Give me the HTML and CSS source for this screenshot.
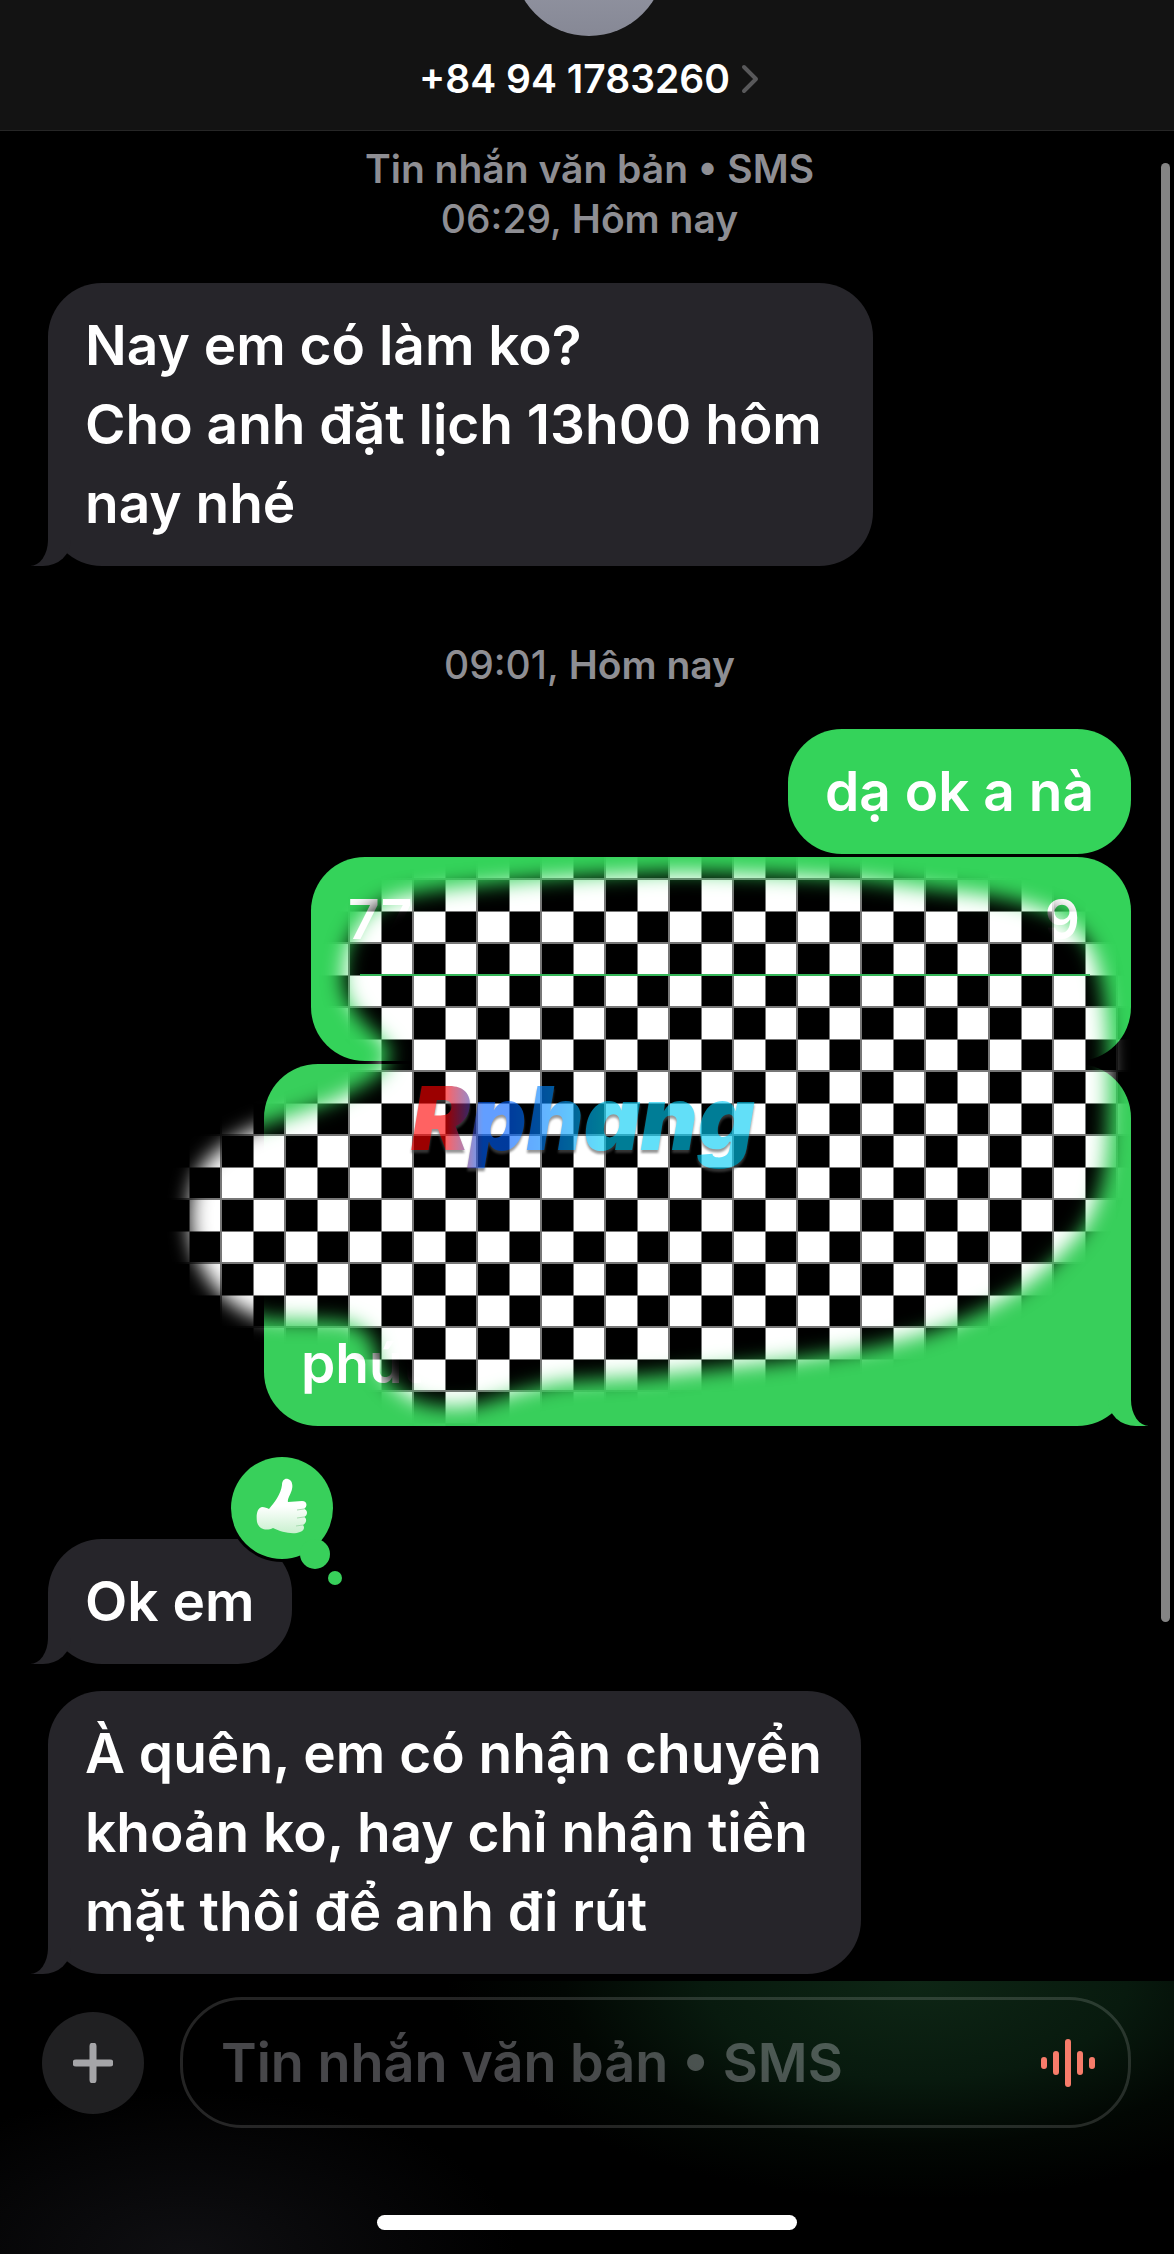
FILE: index.html
```html
<!DOCTYPE html>
<html lang="vi">
<head>
    <meta charset="UTF-8">
    <meta name="viewport" content="width=device-width, initial-scale=1.0">
    <title>+84 94 1783260</title>
    <link rel="stylesheet" href="styles.css">
</head>
<body>
    <header class="header">
        <div class="avatar"></div>
        <button class="contact" type="button">
            <span>+84 94 1783260</span>
            <svg class="chevron" width="18" height="30" viewBox="0 0 18 30" aria-hidden="true">
                <path d="M3 3 L15 15 L3 27" />
            </svg>
        </button>
    </header>

    <main class="thread">
        <div class="stamp">
            <strong>Tin nhắn văn bản • SMS</strong><br>
            06:29, <strong>Hôm nay</strong>
        </div>

        <div class="bubble received wide tail">Nay em có làm ko?<br>Cho anh đặt lịch 13h00 hôm<br>nay nhé</div>

        <div class="stamp later">09:01, <strong>Hôm nay</strong></div>

        <div class="bubble sent">dạ ok a nà</div>

        <div class="covered">
            <div class="bubble sent number"><span>77</span><span>9</span></div>
            <div class="bubble sent address tail">phút</div>

            <!-- checkerboard brushed over both messages -->
            <svg class="cover" width="980" height="570" viewBox="151 857 980 570" aria-hidden="true">
                <defs>
                    <pattern id="checker" x="189" y="911" width="64" height="64" patternUnits="userSpaceOnUse">
                        <rect width="64" height="64" fill="#fff" />
                        <rect x="0" y="0" width="32" height="32" fill="#000" />
                        <rect x="32" y="32" width="32" height="32" fill="#000" />
                        <path d="M0 0 H64 M0 32 H64 M0 0 V64 M32 0 V64" stroke="#777" stroke-width="2" />
                    </pattern>
                    <filter id="soft" x="-10%" y="-10%" width="120%" height="120%" color-interpolation-filters="sRGB">
                        <feGaussianBlur stdDeviation="10" />
                    </filter>
                    <mask id="brush" maskUnits="userSpaceOnUse" x="151" y="857" width="980" height="570">
                        <path filter="url(#soft)" fill="#fff" d="M190 1225 Q188 1178 210 1157 Q236 1134 267 1124 L300 1113 L333 1101 L365 1084 Q394 1068 388 1046 L373 1031 Q350 1012 343 985 Q342 950 356 930 Q366 908 400 896 Q440 888 493 884 Q560 876 683 872 Q784 874 864 880 L941 890 Q1000 894 1044 909 Q1080 922 1094 955 Q1107 990 1108 1060 Q1110 1160 1101 1186 Q1092 1225 1068 1247 Q1030 1290 977 1313 Q930 1336 864 1349 L784 1361 L650 1376 L560 1382 Q520 1390 480 1404 Q447 1412 413 1400 Q385 1384 377 1362 Q376 1326 340 1321 L267 1319 Q232 1312 208 1278 Q192 1255 190 1225 Z" />
                    </mask>
                    <linearGradient id="ink" x1="0" x2="1" y1="0" y2="0">
                        <stop offset="0.1" stop-color="#ff0000" />
                        <stop offset="0.21" stop-color="#0062ff" />
                        <stop offset="0.28" stop-color="#0060ff" />
                        <stop offset="0.42" stop-color="#0090ff" />
                        <stop offset="0.56" stop-color="#00ccf5" />
                    </linearGradient>
                </defs>
                <rect x="151" y="857" width="980" height="570" fill="url(#checker)" mask="url(#brush)" />
                <path d="M360 975 H1090" stroke="#35b558" stroke-width="2" />
                <text class="wordmark" x="411" y="1150">Rphang</text>
            </svg>
        </div>

        <div class="bubble received reacted tail">
            Ok em
            <svg class="reaction" width="120" height="136" viewBox="228 1454 120 136" role="img" aria-label="Thích">
                <defs>
                    <linearGradient id="hand" x1="0" x2="0" y1="0" y2="1">
                        <stop offset="0.5" stop-color="#fff" />
                        <stop offset="1" stop-color="#c9f0cf" />
                    </linearGradient>
                </defs>
                <circle cx="282" cy="1508" r="54" fill="#000" />
                <g fill="#38d05b">
                    <circle cx="282" cy="1508" r="51" />
                    <circle cx="315" cy="1554" r="15" />
                    <circle cx="335" cy="1578" r="7" />
                </g>
                <path fill="url(#hand)" d="M269 1509 C274 1503 281 1494 282 1485 C282 1480 285 1478 288 1479 C292 1480 293 1485 292 1489 C291 1494 287 1499 288 1502 L302 1501 C307 1501 308 1506 304 1509 C308 1510 308 1515 304 1517 C307 1518 307 1523 303 1525 C305 1527 304 1531 300 1532 C293 1535 281 1532 273 1528 C267 1531 259 1530 257 1522 C256 1515 257 1508 262 1507 C265 1507 267 1508 269 1509 Z" />
                <path fill="none" stroke="#a8dcb1" stroke-width="1" d="M297 1510 L304 1509 M297 1518 L304 1517 M296 1526 L303 1525" />
            </svg>
        </div>

        <div class="bubble received question tail">À quên, em có nhận chuyển<br>khoản ko, hay chỉ nhận tiền<br>mặt thôi để anh đi rút</div>
        <div class="scrollbar"></div>
    </main>

    <footer class="footer">
        <form class="composer">
            <button class="plus" type="button" aria-label="Thêm">
                <svg width="40" height="40" viewBox="0 0 40 40" aria-hidden="true">
                    <path d="M20 3 V37 M3 20 H37" />
                </svg>
            </button>
            <div class="field">
                <input type="text" aria-label="Tin nhắn văn bản" placeholder="Tin nhắn văn bản • SMS">
                <button class="voice" type="button" aria-label="Ghi âm">
                    <svg width="54" height="48" viewBox="0 0 54 48" aria-hidden="true">
                        <path d="M3 21 V27 M15 15 V33 M27 3 V45 M39 15 V33 M51 21 V27" />
                    </svg>
                </button>
            </div>
        </form>
        <div class="home-bar"></div>
    </footer>
</body>
</html>
```
FILE: styles.css
```css
* {
    box-sizing: border-box;
}

body {
    margin: 0;
    min-height: 100vh;
    display: flex;
    flex-direction: column;
    overflow-x: hidden;
    background: #000;
    color: #fff;
    font-family: Inter, "Noto Sans", sans-serif;
    font-weight: 500;
}

button {
    padding: 0;
    border: none;
    background: none;
    color: inherit;
    font: inherit;
    cursor: pointer;
}

/* Contact bar */
.header {
    height: 131px;
    display: flex;
    flex-direction: column;
    align-items: center;
    padding-left: 4px;
    background: #131313;
    border-bottom: 1px solid #262626;
}

.avatar {
    flex: none;
    width: 152px;
    height: 152px;
    margin-top: -116px;
    border-radius: 50%;
    background: linear-gradient(#a5a8b6, #868895);
}

.contact {
    display: flex;
    align-items: center;
    gap: 11px;
    margin-top: 18px;
    font-size: 39px;
    font-weight: 600;
    line-height: 50px;
}

.chevron {
    fill: none;
    stroke: #58585a;
    stroke-width: 4;
    stroke-linecap: round;
    stroke-linejoin: round;
}

/* Messages */
.thread {
    position: relative;
    flex: 1;
    display: flex;
    flex-direction: column;
    align-items: flex-start;
    padding: 13px 43px 7px 48px;
}

.stamp {
    align-self: center;
    margin-bottom: 39px;
    color: #8e8e93;
    font-size: 39px;
    line-height: 50px;
    text-align: center;
}

.stamp strong {
    font-weight: 600;
}

.later {
    margin-top: 74px;
}

.bubble {
    position: relative;
    padding: 23px 37px;
    border-radius: 54px;
    font-size: 55px;
    font-weight: 600;
    line-height: 79px;
}

.received {
    background: #26252a;
}

.sent {
    align-self: flex-end;
    background: #34d35a;
}

/* The tail is a foot under the corner, cut by a curved piece of background */
.tail::before,
.tail::after {
    content: "";
    position: absolute;
    bottom: 0;
}

.tail::before {
    width: 40px;
    height: 54px;
    background: inherit;
}

.tail::after {
    width: 30px;
    height: 56px;
    background: #000;
}

.received.tail::before {
    left: -17px;
    border-bottom-right-radius: 28px 26px;
}

.received.tail::after {
    left: -30px;
    border-bottom-right-radius: 18px 26px;
}

.sent.tail::before {
    right: -17px;
    border-bottom-left-radius: 28px 26px;
}

.sent.tail::after {
    right: -30px;
    border-bottom-left-radius: 18px 26px;
}

.wide {
    width: 825px;
}

.question {
    width: 813px;
    margin-top: 27px;
    white-space: nowrap;
}

.covered {
    position: relative;
    align-self: flex-end;
    display: flex;
    flex-direction: column;
    gap: 3px;
    margin-top: 3px;
}

.number {
    display: flex;
    justify-content: space-between;
    width: 820px;
    height: 204px;
    padding-right: 51px;
}

.address {
    width: 867px;
    height: 362px;
    padding-top: 260px;
    background: #38cf5b;
}

.cover {
    position: absolute;
    top: 0;
    right: 0;
}

.wordmark {
    fill: url(#ink);
    opacity: 0.61;
    font-size: 88px;
    font-style: italic;
    font-weight: 900;
    filter: drop-shadow(0 3px 1px #555);
}

.reacted {
    margin-top: 113px;
}

.reaction {
    position: absolute;
    top: -85px;
    left: 180px;
}

.scrollbar {
    position: absolute;
    top: 32px;
    right: 4px;
    bottom: 359px;
    width: 9px;
    border-radius: 5px;
    background: #848484;
}

/* Composer */
.footer {
    display: flex;
    flex-direction: column;
    align-items: center;
    gap: 87px;
    padding: 16px 43px 24px 42px;
    background:
        radial-gradient(ellipse 40% 80% at 78% 0, #0e2615, #081a0e 45%, #020703 75%, transparent),
        radial-gradient(ellipse 28% 60% at 16% 100%, #0f0f12, transparent);
}

.composer {
    width: 100%;
    display: flex;
    align-items: center;
    gap: 36px;
}

.plus {
    flex: none;
    display: flex;
    align-items: center;
    justify-content: center;
    width: 102px;
    height: 102px;
    border-radius: 50%;
    background: #202022;
}

.plus path {
    stroke: #a5a5a8;
    stroke-width: 7;
    stroke-linecap: round;
}

.field {
    flex: 1;
    min-width: 0;
    display: flex;
    align-items: center;
    height: 131px;
    padding: 0 33px 0 38px;
    border: 3px solid rgba(255, 255, 255, 0.14);
    border-radius: 62px;
}

.field input {
    flex: 1;
    min-width: 0;
    padding: 0;
    border: none;
    outline: none;
    background: none;
    color: #fff;
    font: inherit;
    font-size: 54px;
    font-weight: 600;
    line-height: 79px;
}

.field input::placeholder {
    color: rgba(235, 235, 245, 0.3);
    opacity: 1;
}

.voice {
    display: flex;
}

.voice path {
    stroke: #f77c6a;
    stroke-width: 6;
    stroke-linecap: round;
}

.home-bar {
    width: 420px;
    height: 15px;
    border-radius: 8px;
    background: #fff;
}
```
